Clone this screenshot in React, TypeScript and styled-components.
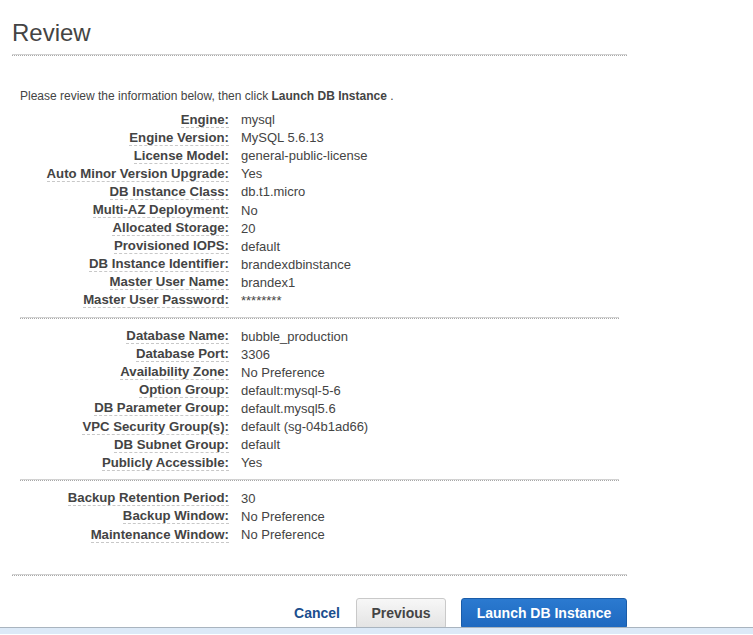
import React from "react";
import styled, { createGlobalStyle } from "styled-components";

const Global = createGlobalStyle`
  html, body { margin: 0; padding: 0; background: #fff; }
  body { font-family: "Liberation Sans", Arial, sans-serif; color: #444; }
`;

const Page = styled.div`
  width: 615px;
  margin-left: 12px;
  display: flex;
  flex-direction: column;
`;

const Title = styled.h1`
  margin: 19px 0 0;
  font-size: 24px;
  line-height: 28px;
  font-weight: normal;
  color: #444;
`;

const Rule = styled.div<{ $top: number; $bottom: number }>`
  height: 0;
  border-top: 1px solid #d2d2d2;
  border-bottom: 1px dotted #a8a8a8;
  margin: ${(p) => p.$top}px 0 ${(p) => p.$bottom}px;
`;

const Content = styled.div`
  padding: 0 8px;
  display: flex;
  flex-direction: column;
`;

const Intro = styled.p`
  margin: 0 0 6.5px;
  font-size: 12px;
  line-height: 15px;
  color: #444;
  b { font-weight: bold; color: #444; }
`;

const Section = styled.div`
  display: flex;
  flex-direction: column;
`;

const Row = styled.div`
  height: 18.1px;
  display: flex;
  align-items: center;
  gap: 12px;
  font-size: 13px;
`;

const LabelCell = styled.div`
  width: 209px;
  flex: none;
  text-align: right;
`;

const Label = styled.span`
  display: inline-block;
  font-weight: bold;
  font-size: 13.2px;
  color: #444;
  line-height: 15px;
  border-bottom: 1px dashed #c8c8c8;
`;

const Value = styled.span`
  color: #444;
  line-height: 15px;
`;

const Actions = styled.div`
  display: flex;
  justify-content: flex-end;
  align-items: center;
  height: 30px;
  margin-top: 22px;
`;

const LinkButton = styled.button`
  background: none;
  border: 0;
  padding: 0;
  margin-right: 16px;
  font: bold 14px "Liberation Sans", Arial, sans-serif;
  color: #1b4e8e;
  cursor: pointer;
`;

const Button = styled.button<{ $primary?: boolean }>`
  height: 31px;
  box-sizing: border-box;
  border-radius: 3px;
  font: bold 14px "Liberation Sans", Arial, sans-serif;
  cursor: pointer;
  align-self: flex-start;
  padding: 0;
  width: ${(p) => (p.$primary ? 166 : 90)}px;
  margin-left: ${(p) => (p.$primary ? 15 : 0)}px;
  color: ${(p) => (p.$primary ? "#fff" : "#444")};
  border: 1px solid ${(p) => (p.$primary ? "#1a5ca8" : "#c9c9c9")};
  background: ${(p) =>
    p.$primary
      ? "linear-gradient(#2b7ad0, #1e68bf)"
      : "linear-gradient(#f7f7f7, #e3e3e3)"};
`;

const Footer = styled.div`
  height: 6px;
  border-top: 1px solid #a9b4bf;
  background: #dce9f7;
  position: relative;
  z-index: 1;
  margin-top: -1px;
`;

type Item = [string, string];

const sections: Item[][] = [
  [
    ["Engine", "mysql"],
    ["Engine Version", "MySQL 5.6.13"],
    ["License Model", "general-public-license"],
    ["Auto Minor Version Upgrade", "Yes"],
    ["DB Instance Class", "db.t1.micro"],
    ["Multi-AZ Deployment", "No"],
    ["Allocated Storage", "20"],
    ["Provisioned IOPS", "default"],
    ["DB Instance Identifier", "brandexdbinstance"],
    ["Master User Name", "brandex1"],
    ["Master User Password", "********"],
  ],
  [
    ["Database Name", "bubble_production"],
    ["Database Port", "3306"],
    ["Availability Zone", "No Preference"],
    ["Option Group", "default:mysql-5-6"],
    ["DB Parameter Group", "default.mysql5.6"],
    ["VPC Security Group(s)", "default (sg-04b1ad66)"],
    ["DB Subnet Group", "default"],
    ["Publicly Accessible", "Yes"],
  ],
  [
    ["Backup Retention Period", "30"],
    ["Backup Window", "No Preference"],
    ["Maintenance Window", "No Preference"],
  ],
];

export default function App() {
  return (
    <>
      <Global />
      <Page>
        <Title>Review</Title>
        <Rule $top={7} $bottom={33} />
        <Content>
          <Intro>
            Please review the information below, then click <b>Launch DB Instance</b> .
          </Intro>
          {sections.map((items, si) => (
            <React.Fragment key={si}>
              {si > 0 && <Rule $top={7.5} $bottom={8} />}
              <Section>
                {items.map(([k, v]) => (
                  <Row key={k}>
                    <LabelCell>
                      <Label>{k}:</Label>
                    </LabelCell>
                    <Value>{v}</Value>
                  </Row>
                ))}
              </Section>
            </React.Fragment>
          ))}
        </Content>
        <Rule $top={30} $bottom={0} />
        <Actions>
          <LinkButton>Cancel</LinkButton>
          <Button>Previous</Button>
          <Button $primary>Launch DB Instance</Button>
        </Actions>
      </Page>
      <Footer />
    </>
  );
}
